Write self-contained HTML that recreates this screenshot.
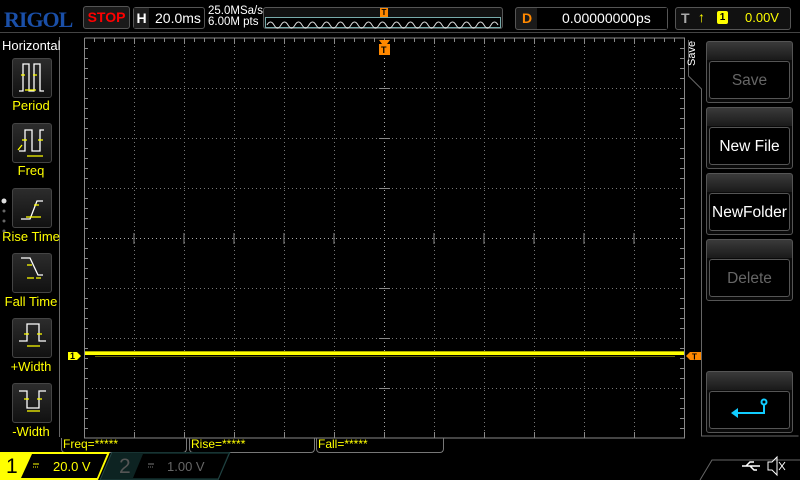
<!DOCTYPE html>
<html><head><meta charset="utf-8"><style>
*{margin:0;padding:0;box-sizing:border-box}
body{width:800px;height:480px;background:#000;position:relative;overflow:hidden;font-family:"Liberation Sans",sans-serif}
.a{position:absolute}
.btn{position:absolute;left:12px;width:40px;height:40px;border:1px solid #444;border-radius:3px;background:linear-gradient(#2c2c2c,#111)}
.lbl{position:absolute;left:0;width:62px;text-align:center;color:#ff0;font-size:13px}
.rb{position:absolute;left:706px;width:87px;height:62px;border:1px solid #555;border-radius:3px;background:linear-gradient(#3a3a3a 0,#1a1a1a 18px,#0a0a0a 18px)}
.rb .in{position:absolute;left:2px;right:2px;top:19px;bottom:3px;border:1px solid #555;border-radius:3px;background:#000;color:#fff;font-size:15.5px;text-align:center;line-height:38px}
.mb{position:absolute;top:438px;height:15px;border:1px solid #777;border-top:none;border-radius:0 0 4px 4px;color:#ff0;font-size:12px;line-height:13px;padding-left:1px}
</style></head><body>
<div class="a" style="left:4px;top:7px;color:#1a4fa8;font-family:'Liberation Serif',serif;font-weight:bold;font-size:22px;letter-spacing:-1px">RIGOL</div>
<div class="a" style="left:83px;top:6px;width:47px;height:23px;border:1px solid #555;border-radius:3px;background:#1a1a1a;color:#f00;font-weight:bold;font-size:14px;text-align:center;line-height:21px">STOP</div>
<div class="a" style="left:133px;top:7px;width:72px;height:22px;border:1px solid #555;border-radius:3px;background:#000"></div>
<div class="a" style="left:134px;top:8px;width:15px;height:20px;background:#1c1c1c;color:#fff;font-weight:bold;font-size:14px;text-align:center;line-height:20px">H</div>
<div class="a" style="left:155px;top:10px;color:#fff;font-size:14px">20.0ms</div>
<div class="a" style="left:208px;top:6px;color:#fff;font-size:11.5px;line-height:11px">25.0MSa/s<br>6.00M pts</div>
<div class="a" style="left:263px;top:7px;width:240px;height:22px;border:1px solid #555;border-radius:3px;background:#111"></div>
<svg class="a" style="left:265px;top:17px" width="236" height="12"><rect x="0.5" y="0.5" width="235" height="10" fill="#000" stroke="#7aa"/><path d="M2 8 q3.5-6 7 0 t7 0 t7 0 t7 0 t7 0 t7 0 t7 0 t7 0 t7 0 t7 0 t7 0 t7 0 t7 0 t7 0 t7 0 t7 0 t7 0 t7 0 t7 0 t7 0 t7 0 t7 0 t7 0 t7 0 t7 0 t7 0 t7 0 t7 0 t7 0 t7 0 t7 0 t7 0 t7 0" fill="none" stroke="#ddd" stroke-width="1"/></svg>
<div class="a" style="left:380px;top:8px;width:8px;height:9px;background:#f80;color:#000;font-size:8px;font-weight:bold;text-align:center;line-height:9px">T</div>
<div class="a" style="left:515px;top:7px;width:153px;height:23px;border:1px solid #555;border-radius:3px;background:#1a1a1a"></div>
<div class="a" style="left:537px;top:8px;width:130px;height:21px;background:#000"></div>
<div class="a" style="left:522px;top:10px;color:#f80;font-weight:bold;font-size:14px">D</div>
<div class="a" style="left:562px;top:10px;color:#fff;font-size:14px">0.00000000ps</div>
<div class="a" style="left:675px;top:7px;width:116px;height:23px;border:1px solid #555;border-radius:3px;background:#111"></div>
<div class="a" style="left:681px;top:10px;color:#aaa;font-weight:bold;font-size:14px">T</div>
<div class="a" style="left:698px;top:9px;color:#ff0;font-size:14px;font-weight:bold">&#x2191;</div>
<div class="a" style="left:717px;top:11px;width:11px;height:13px;background:#ff0;border-radius:2px;color:#000;font-size:10px;font-weight:bold;text-align:center;line-height:13px">1</div>
<div class="a" style="left:745px;top:10px;color:#ff0;font-size:13px">0.00V</div>
<div class="a" style="left:0;top:32px;width:800px;height:1px;background:#444"></div>
<div class="a" style="left:0;top:37px;width:60px;height:400px;border-right:1px solid #666"></div>
<div class="a" style="left:2px;top:38px;color:#fff;font-size:13px">Horizontal</div>
<div class="btn" style="top:58px"></div><div class="lbl" style="top:98px">Period</div>
<div class="btn" style="top:123px"></div><div class="lbl" style="top:163px">Freq</div>
<div class="btn" style="top:188px"></div><div class="lbl" style="top:229px">Rise Time</div>
<div class="btn" style="top:253px"></div><div class="lbl" style="top:294px">Fall Time</div>
<div class="btn" style="top:318px"></div><div class="lbl" style="top:359px">+Width</div>
<div class="btn" style="top:383px"></div><div class="lbl" style="top:424px">-Width</div>
<svg class="a" style="left:0;top:0" width="60" height="440" fill="none" stroke-width="1.3">
<path d="M19 91h4V64h6v27h5V64h6v27h4" stroke="#fff"/><path d="M21 75h4M33 75h4M25 90h11" stroke="#ff0"/>
<path d="M19 151h6v-21h7v21h8v-21h4" stroke="#fff"/><path d="M22 140h5M38 140h5M27 156h16M18 150l4-5" stroke="#ff0"/>
<path d="M21 219h9l7-18h6" stroke="#fff"/><path d="M34 205h5M26 217h5M31 217h10" stroke="#ff0"/>
<path d="M21 258h9l8 17h5" stroke="#fff"/><path d="M27 265h5M36 278h5M27 278h7" stroke="#ff0"/>
<path d="M19 341h8v-17h12v17h7" stroke="#fff"/><path d="M24 334h5M37 334h5M27 346h13" stroke="#ff0"/>
<path d="M19 391h8v17h12v-17h7" stroke="#fff"/><path d="M24 399h5M37 399h5M27 411h13" stroke="#ff0"/>
<circle cx="4" cy="201" r="2.5" fill="#ddd" stroke="none"/><circle cx="4" cy="211" r="1.5" fill="#666" stroke="none"/><circle cx="4" cy="221" r="1.5" fill="#666" stroke="none"/><circle cx="4" cy="231" r="1.5" fill="#666" stroke="none"/>
</svg>
<svg class="a" style="left:0;top:0" width="800" height="480">
<g stroke="#777" stroke-width="1" stroke-dasharray="1,3">
<path d="M134.5 38v400M184.5 38v400M234.5 38v400M284.5 38v400M334.5 38v400M434.5 38v400M484.5 38v400M534.5 38v400M584.5 38v400M634.5 38v400"/>
<path d="M84 88.5h600M84 138.5h600M84 188.5h600M84 288.5h600M84 338.5h600M84 388.5h600"/>
<path d="M384.5 38v400M84 238.5h600" stroke="#aaa"/>
</g>
<path d="M84.5 38v400h600V38H84.5" stroke="#888" fill="none"/>
<g stroke="#888">
<path d="M94.5 38v4M104.5 38v4M114.5 38v4M124.5 38v4M144.5 38v4M154.5 38v4M164.5 38v4M174.5 38v4M194.5 38v4M204.5 38v4M214.5 38v4M224.5 38v4M244.5 38v4M254.5 38v4M264.5 38v4M274.5 38v4M294.5 38v4M304.5 38v4M314.5 38v4M324.5 38v4M344.5 38v4M354.5 38v4M364.5 38v4M374.5 38v4M394.5 38v4M404.5 38v4M414.5 38v4M424.5 38v4M444.5 38v4M454.5 38v4M464.5 38v4M474.5 38v4M494.5 38v4M504.5 38v4M514.5 38v4M524.5 38v4M544.5 38v4M554.5 38v4M564.5 38v4M574.5 38v4M594.5 38v4M604.5 38v4M614.5 38v4M624.5 38v4M644.5 38v4M654.5 38v4M664.5 38v4M674.5 38v4"/>
<path d="M134.5 38v6M184.5 38v6M234.5 38v6M284.5 38v6M334.5 38v6M384.5 38v6M434.5 38v6M484.5 38v6M534.5 38v6M584.5 38v6M634.5 38v6"/>
<path d="M134.5 438v-6M184.5 438v-6M234.5 438v-6M284.5 438v-6M334.5 438v-6M384.5 438v-6M434.5 438v-6M484.5 438v-6M534.5 438v-6M584.5 438v-6M634.5 438v-6"/>
<path d="M84 48.5h4M84 58.5h4M84 68.5h4M84 78.5h4M84 98.5h4M84 108.5h4M84 118.5h4M84 128.5h4M84 148.5h4M84 158.5h4M84 168.5h4M84 178.5h4M84 198.5h4M84 208.5h4M84 218.5h4M84 228.5h4M84 248.5h4M84 258.5h4M84 268.5h4M84 278.5h4M84 298.5h4M84 308.5h4M84 318.5h4M84 328.5h4M84 348.5h4M84 358.5h4M84 368.5h4M84 378.5h4M84 398.5h4M84 408.5h4M84 418.5h4M84 428.5h4"/>
<path d="M684 48.5h-4M684 58.5h-4M684 68.5h-4M684 78.5h-4M684 98.5h-4M684 108.5h-4M684 118.5h-4M684 128.5h-4M684 148.5h-4M684 158.5h-4M684 168.5h-4M684 178.5h-4M684 198.5h-4M684 208.5h-4M684 218.5h-4M684 228.5h-4M684 248.5h-4M684 258.5h-4M684 268.5h-4M684 278.5h-4M684 298.5h-4M684 308.5h-4M684 318.5h-4M684 328.5h-4M684 348.5h-4M684 358.5h-4M684 368.5h-4M684 378.5h-4M684 398.5h-4M684 408.5h-4M684 418.5h-4M684 428.5h-4"/>
<path d="M379 88.5h11M379 138.5h11M379 188.5h11M379 288.5h11M379 338.5h11M379 388.5h11M134 233v11M184 233v11M234 233v11M284 233v11M334 233v11M434 233v11M484 233v11M534 233v11M584 233v11M634 233v11"/>
</g>
<rect x="85" y="352" width="599" height="3" fill="#ff0"/>
<rect x="85" y="351" width="599" height="1" fill="#aa0"/><rect x="95" y="356" width="580" height="1" fill="#660"/>
<path d="M68 352h9l4 4-4 4h-9z" fill="#ff0"/><text x="70" y="359" font-size="9" fill="#000" font-weight="bold" font-family="Liberation Sans">1</text>
<path d="M686 356l4-4h12v8h-12z" fill="#f80"/><text x="692" y="359.5" font-size="8" fill="#000" font-weight="bold" font-family="Liberation Sans">T</text>
<path d="M379 40h11l-3 4h-2v8l-0.5 3-0.5-3v-8h-2z" fill="#f80"/><rect x="379" y="44" width="11" height="11" fill="#f80"/><text x="381" y="53" font-size="9" fill="#000" font-weight="bold" font-family="Liberation Sans">T</text>
<path d="M688.5 40v36l13 13v347h97" stroke="#666" fill="none"/>
</svg>
<div class="a" style="left:686px;top:66px;color:#fff;font-size:11px;transform:rotate(-90deg);transform-origin:left top;">Save</div>
<div class="rb" style="top:41px"><div class="in" style="color:#666">Save</div></div>
<div class="rb" style="top:107px"><div class="in">New File</div></div>
<div class="rb" style="top:173px"><div class="in">NewFolder</div></div>
<div class="rb" style="top:239px"><div class="in" style="color:#666">Delete</div></div>
<div class="rb" style="top:371px"><div class="in"></div></div>
<svg class="a" style="left:730px;top:398px" width="40" height="22"><circle cx="34" cy="4" r="2.5" fill="none" stroke="#1cf" stroke-width="2"/><path d="M34 7v8H6" stroke="#1cf" stroke-width="2" fill="none"/><path d="M1 15l7-5v10z" fill="#1cf"/></svg>
<div class="mb" style="left:61px;width:126px">Freq=*****</div>
<div class="mb" style="left:189px;width:126px">Rise=*****</div>
<div class="mb" style="left:316px;width:128px">Fall=*****</div>
<svg class="a" style="left:0;top:452px" width="800" height="28">
<path d="M0 0h110l-12 28H0z" fill="#ff0"/>
<path d="M32 2h75l-10 24H21z" fill="#000"/>
<path d="M112 0h118l-12 28H100z" fill="#0d2322" stroke="#244" stroke-width="1"/>
<path d="M143 2h85l-10 24H133z" fill="#000"/>
<path d="M700 28l12-20h88" stroke="#666" fill="none"/>
<path d="M33 12h6M33 15h1M35 15h1M37 15h1" stroke="#ff0"/>
<path d="M148 12h6M148 15h1M150 15h1M152 15h1" stroke="#777"/>
<path d="M742 14h18M746 14l4-4h4M750 14l4 4h3" stroke="#fff" fill="none" stroke-width="1.5"/>
<path d="M768 10h4l5-5v18l-5-5h-4z" stroke="#fff" fill="none"/><path d="M779 10l6 8M785 10l-6 8" stroke="#fff"/>
</svg>
<div class="a" style="left:6px;top:455px;color:#000;font-size:21px">1</div>
<div class="a" style="left:53px;top:459px;color:#ff0;font-size:13px">20.0 V</div>
<div class="a" style="left:119px;top:455px;color:#555;font-size:21px">2</div>
<div class="a" style="left:167px;top:459px;color:#666;font-size:13px">1.00 V</div>
</body></html>
